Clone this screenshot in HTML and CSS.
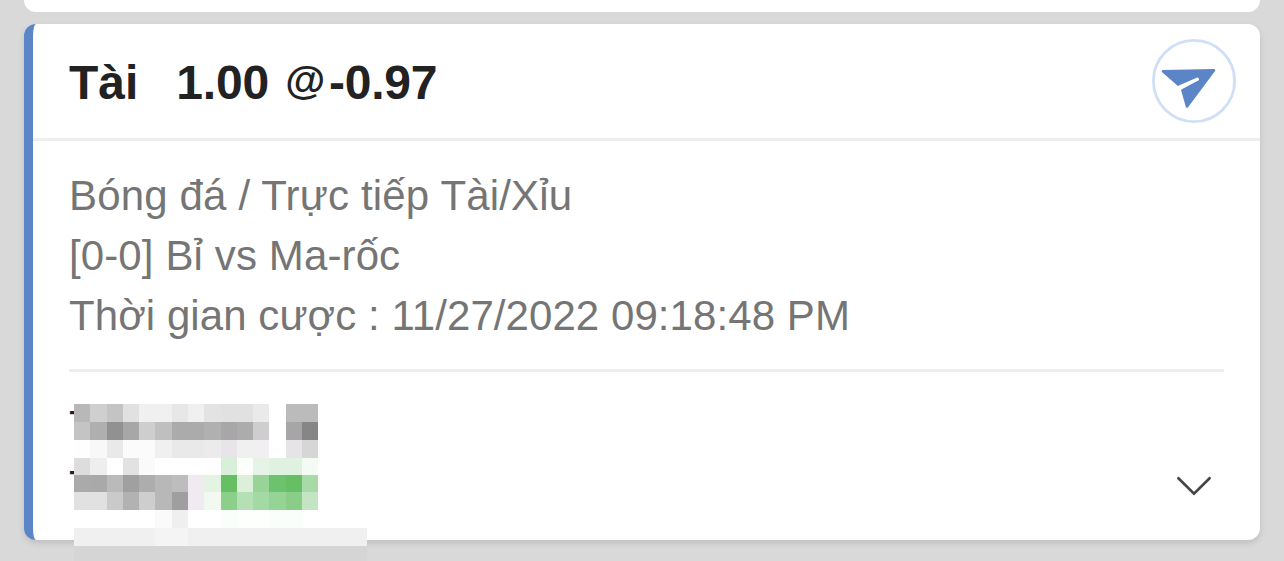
FILE: index.html
```html
<!DOCTYPE html>
<html lang="vi">
<head>
    <meta charset="UTF-8">
    <meta name="viewport" content="width=device-width, initial-scale=1.0">
    <title>Tài 1.00 @-0.97</title>
    <link rel="stylesheet" href="styles.css">
</head>
<body>
    <div class="prev-card"></div>

    <div class="bet-card">
        <div class="bet-header">
            <h2><span class="pick">Tài</span><span class="odds">1.00 <span class="at">@</span>-0.97</span></h2>
            <button class="share">
                <svg width="84" height="84" viewBox="0 0 84 84">
                    <circle cx="42" cy="42" r="40.6" fill="#fff" stroke="#cfdff7" stroke-width="2.8"/>
                    <path d="M11 32.2 L62 31.2 L35 67.5 L30.4 51 L26.5 45.8 Z" fill="#5c85c7" stroke="#5c85c7" stroke-width="2.6" stroke-linejoin="round"/>
                    <path d="M23 49 L45.6 39.2 L46.4 40.6 L29 50 L27 53 Z" fill="#fff" stroke="#fff" stroke-width="1.4" stroke-linejoin="round"/>
                </svg>
            </button>
        </div>

        <div class="bet-info">
            <p class="sport">Bóng đá / Trực tiếp Tài/Xỉu</p>
            <p class="match">[0-0] Bỉ vs Ma-rốc</p>
            <p class="time">Thời gian cược : 11/27/2022 09:18:48 PM</p>
        </div>

        <div class="bet-result">
            <div class="amounts">
                <p>T</p>
                <p>T</p>
            </div>
            <svg class="chevron" width="36" height="20" viewBox="0 0 36 20">
                <path d="M2.4 2.2 L18 17.6 L33.6 2.2" fill="none" stroke="#444" stroke-width="2.6" stroke-linecap="round"/>
            </svg>
        </div>
    </div>

    <!-- mosaic over the amounts -->
    <svg class="mosaic" id="mosaic" width="293" height="157"></svg>

    <script>
        const xs = [0, 16, 33, 49, 65, 81, 98, 114, 130, 147, 163, 179, 195, 212, 228, 244];
        const ys = [0, 18, 36, 54, 71, 88, 106, 124, 142, 157];
        const rows = [
            'b8b8b8 cfcfcf c4c4c4 e1e1e1 f0f0f0 f0f0f0 e7e7e7 f0f0f0 e3e3e3 e1e1e1 e1e1e1 eaeaea ffffff bbbbbb bbbbbb',
            'c4c4c4 afafaf 919191 a7a7a7 cecece bfbfbf ababab ababab b0b0b0 a7a7a7 acacac cecece ffffff a6a6a6 868686',
            'fefefe f8f8f8 e9e9e9 fbfbfb fbfbfb f0f0f0 e9e9e9 e9e9e9 ebebeb e8e5e9 f0f0f0 f1eff2 ffffff e7e4e8 d6d6d6',
            'dddddd eeeeee ffffff e2e2e2 fafafa ffffff ffffff ffffff fefffe d8efd8 fdfffd e6f4e6 dff2e0 dff2e0 f4faf4',
            'aaaaaa a9a9a9 bababa a0a0a0 adadad b8b8b8 bdbdbd efebf0 e3f3e4 67bf64 dbefdb 98d398 6bc36d 67bf64 a7daa7',
            'e1e1e1 e1e1e1 cacaca b2b2b2 cecece b8b8b8 9f9f9f efebf0 f1f9f1 8bcf8b b5e0b5 a3d9a3 96d396 8acd88 c3e5c3',
            'ffffff ffffff ffffff ffffff ffffff fafafa efefef ffffff ffffff fafefa fcfffc fcfffc fafefa fafefa ffffff'
        ];
        let cells = '';
        rows.forEach((row, r) => {
            row.split(' ').forEach((color, c) => {
                cells += `<rect x="${xs[c]}" y="${ys[r]}" width="${xs[c + 1] - xs[c]}" height="${ys[r + 1] - ys[r]}" fill="#${color}"/>`;
            });
        });
        cells += '<rect y="124" width="293" height="18" fill="#f0f0f0"/>';
        cells += '<rect x="81" y="124" width="33" height="18" fill="#f4f4f4"/>';
        cells += '<rect y="142" width="293" height="15" fill="#d5d5d5"/>';
        document.getElementById('mosaic').innerHTML = cells;
    </script>
</body>
</html>
```

FILE: styles.css
```css
* {
    box-sizing: border-box;
}
body {
    margin: 0;
    padding: 0 24px;
    height: 561px;
    overflow: hidden;
    background: #d9d9d9;
    font-family: "Liberation Sans", Arial, sans-serif;
    color: #222;
}
h2, p {
    margin: 0;
    white-space: nowrap;
}
.prev-card {
    height: 12px;
    background: #fff;
    border-radius: 0 0 12px 12px;
    margin-bottom: 12px;
}
.bet-card {
    height: 516px;
    background: #fff;
    border-left: 9px solid #5c85c7;
    border-radius: 12px;
    box-shadow: 0 3px 6px rgba(0, 0, 0, 0.12);
}
.bet-header {
    display: flex;
    align-items: center;
    justify-content: space-between;
    height: 117px;
    padding: 0 24px 0 36px;
    border-bottom: 3px solid #eee;
}
.bet-header h2 {
    display: flex;
    gap: 38px;
    font-size: 48px;
    line-height: 60px;
    padding-top: 3px;
}
.odds {
    letter-spacing: -0.2px;
}
.at {
    display: inline-block;
    font-size: 41px;
    line-height: 1;
    margin: 0 4px 0 3px;
    transform: translateY(-5px);
}
.share {
    width: 84px;
    height: 84px;
    padding: 0;
    border: none;
    background: none;
}
.share svg {
    display: block;
}
.bet-info {
    margin: 0 36px;
    padding: 25px 0 23px;
    border-bottom: 3px solid #eee;
    font-size: 42px;
    line-height: 60px;
    color: #757575;
}
.sport {
    letter-spacing: 0.16px;
}
.match {
    letter-spacing: 0.12px;
}
.time {
    letter-spacing: 0.07px;
}
.bet-result {
    display: flex;
    justify-content: space-between;
    padding: 24px 48px 0 36px;
    font-size: 42px;
    line-height: 60px;
}
.chevron {
    margin-top: 80px;
}
.mosaic {
    position: absolute;
    left: 74px;
    top: 404px;
    shape-rendering: crispEdges;
}
```
